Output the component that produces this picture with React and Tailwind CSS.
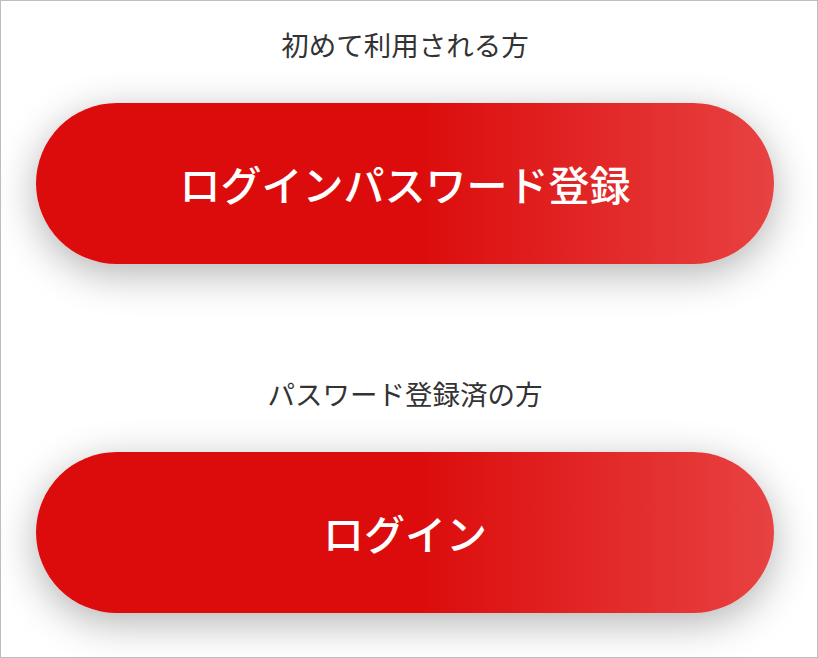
export default function App() {
  const sections = [
    { label: '初めて利用される方', button: 'ログインパスワード登録' },
    { label: 'パスワード登録済の方', button: 'ログイン' },
  ];

  return (
    <div
      className="w-[818px] h-[658px] border border-[#bdbdbd] bg-white overflow-hidden pl-[35px] pr-[43px]"
      style={{ fontFamily: '"Noto Sans CJK JP", "Noto Sans", sans-serif' }}
    >
      {sections.map((s, i) => (
        <div key={i} className={i === 0 ? 'pt-[25px]' : 'pt-[111px]'}>
          {/* label */}
          <p className="text-center text-[27.5px] leading-[36px] text-[#333333]">
            {s.label}
          </p>
          {/* pill button */}
          <button
            className="mt-[41px] w-full h-[161px] rounded-full flex items-center justify-center text-white text-[41px] font-medium bg-[linear-gradient(to_right,#dc0c0c_0%,#dc0c0c_52%,#e84242_100%)] shadow-[0_10px_40px_rgba(0,0,0,0.3)]"
          >
            {s.button}
          </button>
        </div>
      ))}
    </div>
  );
}
